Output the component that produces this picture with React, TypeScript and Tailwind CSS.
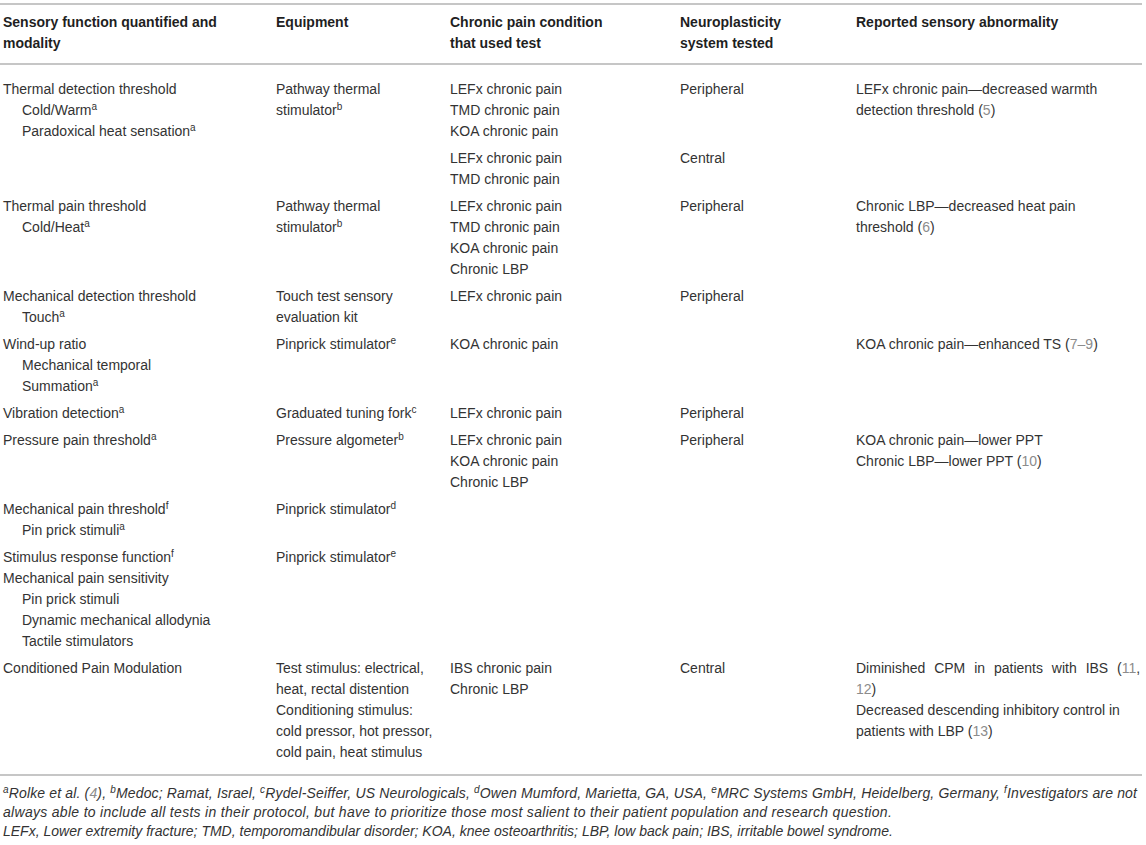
import React from "react";

const Sup = ({ c }: { c: string }) => (
  <span className="relative -top-[5px] text-[10px] leading-none">{c}</span>
);
const Ref = ({ n }: { n: string }) => <span className="text-[#8c8c8c]">{n}</span>;

const L = ({ children, i }: { children: React.ReactNode; i?: boolean }) => (
  <div className={i ? "pl-[19px] whitespace-nowrap" : "whitespace-nowrap"}>{children}</div>
);

type Cell = { content: React.ReactNode; rowSpan?: number };

export default function App() {
  const td = "align-top pl-[3px] pr-1";
  const rows: { cells: Cell[]; pt: string; pb: string }[] = [
    {
      pt: "pt-[14px]",
      pb: "pb-[3px]",
      cells: [
        {
          rowSpan: 2,
          content: (
            <>
              <L>Thermal detection threshold</L>
              <L i>Cold/Warm<Sup c="a" /></L>
              <L i>Paradoxical heat sensation<Sup c="a" /></L>
            </>
          ),
        },
        {
          rowSpan: 2,
          content: (
            <>
              <L>Pathway thermal</L>
              <L>stimulator<Sup c="b" /></L>
            </>
          ),
        },
        {
          content: (
            <>
              <L>LEFx chronic pain</L>
              <L>TMD chronic pain</L>
              <L>KOA chronic pain</L>
            </>
          ),
        },
        { content: <L>Peripheral</L> },
        {
          rowSpan: 2,
          content: (
            <>
              <L>LEFx chronic pain—decreased warmth</L>
              <L>detection threshold (<Ref n="5" />)</L>
            </>
          ),
        },
      ],
    },
    {
      pt: "pt-[3px]",
      pb: "pb-[3px]",
      cells: [
        {
          content: (
            <>
              <L>LEFx chronic pain</L>
              <L>TMD chronic pain</L>
            </>
          ),
        },
        { content: <L>Central</L> },
      ],
    },
    {
      pt: "pt-[3px]",
      pb: "pb-[3px]",
      cells: [
        {
          content: (
            <>
              <L>Thermal pain threshold</L>
              <L i>Cold/Heat<Sup c="a" /></L>
            </>
          ),
        },
        {
          content: (
            <>
              <L>Pathway thermal</L>
              <L>stimulator<Sup c="b" /></L>
            </>
          ),
        },
        {
          content: (
            <>
              <L>LEFx chronic pain</L>
              <L>TMD chronic pain</L>
              <L>KOA chronic pain</L>
              <L>Chronic LBP</L>
            </>
          ),
        },
        { content: <L>Peripheral</L> },
        {
          content: (
            <>
              <L>Chronic LBP—decreased heat pain</L>
              <L>threshold (<Ref n="6" />)</L>
            </>
          ),
        },
      ],
    },
    {
      pt: "pt-[3px]",
      pb: "pb-[3px]",
      cells: [
        {
          content: (
            <>
              <L>Mechanical detection threshold</L>
              <L i>Touch<Sup c="a" /></L>
            </>
          ),
        },
        {
          content: (
            <>
              <L>Touch test sensory</L>
              <L>evaluation kit</L>
            </>
          ),
        },
        { content: <L>LEFx chronic pain</L> },
        { content: <L>Peripheral</L> },
        { content: null },
      ],
    },
    {
      pt: "pt-[3px]",
      pb: "pb-[3px]",
      cells: [
        {
          content: (
            <>
              <L>Wind-up ratio</L>
              <L i>Mechanical temporal</L>
              <L i>Summation<Sup c="a" /></L>
            </>
          ),
        },
        { content: <L>Pinprick stimulator<Sup c="e" /></L> },
        { content: <L>KOA chronic pain</L> },
        { content: null },
        {
          content: (
            <L>
              KOA chronic pain—enhanced TS (<Ref n="7–9" />)
            </L>
          ),
        },
      ],
    },
    {
      pt: "pt-[3px]",
      pb: "pb-[3px]",
      cells: [
        { content: <L>Vibration detection<Sup c="a" /></L> },
        { content: <L>Graduated tuning fork<Sup c="c" /></L> },
        { content: <L>LEFx chronic pain</L> },
        { content: <L>Peripheral</L> },
        { content: null },
      ],
    },
    {
      pt: "pt-[3px]",
      pb: "pb-[3px]",
      cells: [
        { content: <L>Pressure pain threshold<Sup c="a" /></L> },
        { content: <L>Pressure algometer<Sup c="b" /></L> },
        {
          content: (
            <>
              <L>LEFx chronic pain</L>
              <L>KOA chronic pain</L>
              <L>Chronic LBP</L>
            </>
          ),
        },
        { content: <L>Peripheral</L> },
        {
          content: (
            <>
              <L>KOA chronic pain—lower PPT</L>
              <L>Chronic LBP—lower PPT (<Ref n="10" />)</L>
            </>
          ),
        },
      ],
    },
    {
      pt: "pt-[3px]",
      pb: "pb-[3px]",
      cells: [
        {
          content: (
            <>
              <L>Mechanical pain threshold<Sup c="f" /></L>
              <L i>Pin prick stimuli<Sup c="a" /></L>
            </>
          ),
        },
        { content: <L>Pinprick stimulator<Sup c="d" /></L> },
        { content: null },
        { content: null },
        { content: null },
      ],
    },
    {
      pt: "pt-[3px]",
      pb: "pb-[3px]",
      cells: [
        {
          content: (
            <>
              <L>Stimulus response function<Sup c="f" /></L>
              <L>Mechanical pain sensitivity</L>
              <L i>Pin prick stimuli</L>
              <L i>Dynamic mechanical allodynia</L>
              <L i>Tactile stimulators</L>
            </>
          ),
        },
        { content: <L>Pinprick stimulator<Sup c="e" /></L> },
        { content: null },
        { content: null },
        { content: null },
      ],
    },
    {
      pt: "pt-[3px]",
      pb: "pb-[11px]",
      cells: [
        { content: <L>Conditioned Pain Modulation</L> },
        {
          content: (
            <>
              <L>Test stimulus: electrical,</L>
              <L>heat, rectal distention</L>
              <L>Conditioning stimulus:</L>
              <L>cold pressor, hot pressor,</L>
              <L>cold pain, heat stimulus</L>
            </>
          ),
        },
        {
          content: (
            <>
              <L>IBS chronic pain</L>
              <L>Chronic LBP</L>
            </>
          ),
        },
        { content: <L>Central</L> },
        {
          content: (
            <>
              <div className="whitespace-nowrap [word-spacing:5px]">
                Diminished CPM in patients with IBS (<Ref n="11" />,
              </div>
              <L>
                <Ref n="12" />)
              </L>
              <L>Decreased descending inhibitory control in</L>
              <L>patients with LBP (<Ref n="13" />)</L>
            </>
          ),
        },
      ],
    },
  ];

  const th = "align-top text-left font-bold pl-[3px] pt-[7px] pb-[9px] text-[#1f1f1f]";

  return (
    <div
      className="w-[1146px] h-[845px] bg-white pt-[3px] text-[14px] leading-[21px] text-[#333333]"
      style={{ fontFamily: '"Liberation Sans", Arial, sans-serif' }}
    >
      <table className="w-[1142px] table-fixed border-collapse">
        <colgroup>
          <col className="w-[273px]" />
          <col className="w-[174px]" />
          <col className="w-[230px]" />
          <col className="w-[176px]" />
          <col className="w-[289px]" />
        </colgroup>
        <thead>
          <tr className="border-t-2 border-b-2 border-[#c6c6c6]">
            <th className={th}>
              Sensory function quantified and
              <br />
              modality
            </th>
            <th className={th}>Equipment</th>
            <th className={th}>
              Chronic pain condition
              <br />
              that used test
            </th>
            <th className={th}>
              Neuroplasticity
              <br />
              system tested
            </th>
            <th className={th}>Reported sensory abnormality</th>
          </tr>
        </thead>
        <tbody>
          {rows.map((r, ri) => (
            <tr key={ri} className={ri === rows.length - 1 ? "border-b-2 border-[#c6c6c6]" : ""}>
              {r.cells.map((c, ci) => (
                <td key={ci} rowSpan={c.rowSpan} className={`${td} ${r.pt} ${r.pb}`}>
                  {c.content}
                </td>
              ))}
            </tr>
          ))}
        </tbody>
      </table>
      <div className="pl-[3px] pt-[8px] text-[14px] leading-[19px] italic text-[#333333]">
        <div className="whitespace-nowrap tracking-[0.15px]">
          <Sup c="a" />Rolke et al. (<Ref n="4" />), <Sup c="b" />Medoc; Ramat, Israel, <Sup c="c" />Rydel-Seiffer, US
          Neurologicals, <Sup c="d" />Owen Mumford, Marietta, GA, USA, <Sup c="e" />MRC Systems GmbH, Heidelberg, Germany,{" "}
          <Sup c="f" />Investigators are not
        </div>
        <div className="whitespace-nowrap tracking-[0.3px]">
          always able to include all tests in their protocol, but have to prioritize those most salient to their patient
          population and research question.
        </div>
        <div className="whitespace-nowrap">
          LEFx, Lower extremity fracture; TMD, temporomandibular disorder; KOA, knee osteoarthritis; LBP, low back pain;
          IBS, irritable bowel syndrome.
        </div>
      </div>
    </div>
  );
}
